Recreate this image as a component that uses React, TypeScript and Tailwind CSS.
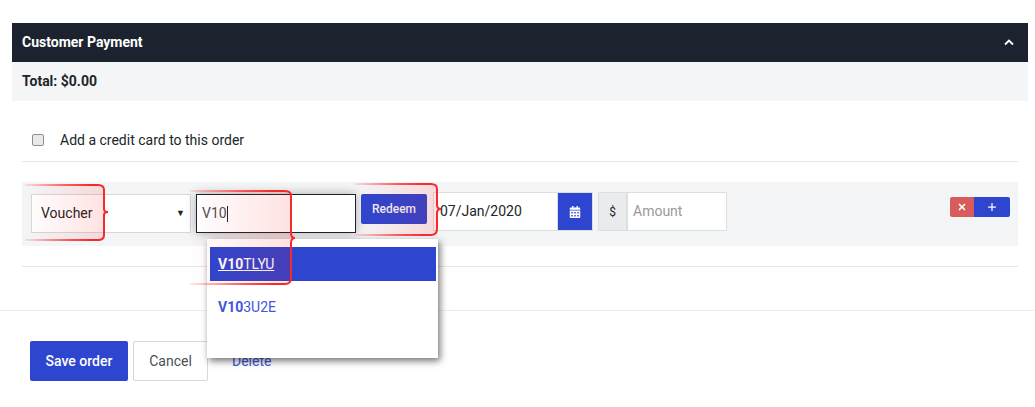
import React from "react";
import { Plus, X } from "lucide-react";
import { FaCalendarAlt } from "react-icons/fa";

function Callout({ className, d, id, w, h }: { className: string; d: string; id: string; w: number; h: number }) {
  return (
    <svg className={`absolute pointer-events-none ${className}`} width={w} height={h} viewBox={`0 0 ${w} ${h}`} fill="none">
      <defs>
        <linearGradient id={id} x1="0" x2="1" y1="0" y2="0">
          <stop offset="0" stopColor="#ff0000" stopOpacity="0" />
          <stop offset="1" stopColor="#ff0000" stopOpacity="0.12" />
        </linearGradient>
        <linearGradient id={id + "s"} x1="0" x2="1" y1="0" y2="0">
          <stop offset="0" stopColor="#ff2a2a" stopOpacity="0.1" />
          <stop offset="0.5" stopColor="#ff2a2a" stopOpacity="0.75" />
          <stop offset="0.8" stopColor="#f52a2a" stopOpacity="1" />
          <stop offset="1" stopColor="#f52a2a" stopOpacity="1" />
        </linearGradient>
      </defs>
      <path d={d} fill={`url(#${id})`} stroke={`url(#${id}s)`} strokeWidth="2" />
    </svg>
  );
}

export default function App() {
  return (
    <div className="relative w-[1035px] h-[407px] bg-white overflow-hidden text-[14px] text-[#212529] font-['Roboto',sans-serif]">
      <div className="pt-[23px] px-[12px] pr-[7px]">
        <div className="h-[39px] bg-[#1c232e] flex items-center justify-between px-[10px] pr-[14px] text-white font-bold text-[14px]">
          <span>Customer Payment</span>
          <svg width="10" height="7" viewBox="0 0 10 7" fill="none" stroke="white" strokeWidth="1.8"><path d="M1 5.5 L5 1.5 L9 5.5" /></svg>
        </div>
        <div className="h-[39px] bg-[#f4f5f7] flex items-center px-[10px] font-bold text-[14px]">Total: $0.00</div>
      </div>

      <div className="mx-[22px] mr-[17px]">
        <label className="h-[60px] flex items-center pl-[10px] pt-[18px] gap-[16px] text-[14px]">
          <span className="w-[12px] h-[12px] rounded-[2px] border border-[#8e8e8e] bg-[#e9e9e9] block" />
          <span>Add a credit card to this order</span>
        </label>
        <div className="h-px bg-[#e6e8e8]" />
        <div className="mt-[20px] h-[64px] bg-[#f4f5f7] flex items-start pl-[9px] pr-[8px]">
          <div className="mt-[12px] w-[160px] h-[39px] border border-[#d5d8d9] bg-white flex items-center justify-between pl-[9px] pr-[5px]">
            <span>Voucher</span>
            <span className="text-[9px] text-[#222]">▼</span>
          </div>
          <div className="ml-[5px] mt-[12px] w-[160px] h-[39px] border border-[#1c232e] bg-white flex items-center pl-[5px] shadow-[0_0_10px_rgba(0,0,0,0.3)] text-[#495057]">
            <span>V10</span>
            <span className="w-px h-[16px] bg-[#222]" />
          </div>
          <button className="ml-[5px] mt-[12px] w-[66px] h-[30px] rounded-[2px] bg-[#2e46cf] text-[#f0f0f8] font-medium text-[12px]">Redeem</button>
          <div className="ml-[6px] mt-[10px] w-[124px] h-[39px] border border-[#dcdfe0] border-r-0 bg-white flex items-center pl-[6px]">07/Jan/2020</div>
          <div className="w-[36px] h-[39px] mt-[10px] bg-[#2e46cf] border border-[#dcdfe0] flex items-center justify-center text-white">
            <FaCalendarAlt size={12} />
          </div>
          <div className="ml-[5px] mt-[10px] w-[29px] h-[39px] bg-[#e9ecef] border border-[#dcdfe0] flex items-center justify-center text-[12px]">$</div>
          <div className="mt-[10px] w-[100px] h-[39px] bg-white border border-[#dcdfe0] flex items-center pl-[5px] text-[#9a9a9a]">Amount</div>
          <div className="ml-auto mt-[15px] flex h-[20px]">
            <div className="w-[24px] bg-[#d95c5c] rounded-l-[2px] flex items-center justify-center text-white"><X size={10} strokeWidth={4} /></div>
            <div className="w-[36px] bg-[#2e46cf] rounded-r-[2px] flex items-center justify-center text-white"><Plus size={12} strokeWidth={2.5} /></div>
          </div>
        </div>
        <div className="mt-[20px] h-px bg-[#e6e8e8]" />
      </div>

      <div className="mt-[43px] h-px bg-[#ebeeee]" />
      <div className="pt-[30px] pl-[30px] flex items-center">
        <button className="w-[98px] h-[40px] rounded-[2px] bg-[#2e46cf] text-white font-medium text-[14px]">Save order</button>
        <button className="ml-[5px] w-[75px] h-[40px] rounded-[2px] border border-[#d5d8d9] bg-white text-[#495057] text-[14px]">Cancel</button>
        <a className="ml-[24px] text-[#3f57dd]">Delete</a>
      </div>

      <div className="absolute left-[207px] top-[239px] w-[231px] h-[119px] bg-white shadow-[2px_3px_7px_rgba(0,0,0,0.55)] pt-[8px] pl-[3px] pr-[2px] text-[14px]">
        <div className="h-[34px] bg-[#2e46cf] flex items-center pl-[8px] text-white underline"><b>V10</b>TLYU</div>
        <div className="h-[52px] flex items-center pl-[8px] text-[#3f57dd]"><b>V10</b>3U2E</div>
      </div>

      <Callout id="a" className="left-[24px] top-[184px]" w={86} h={58}
        d="M1 1 H74 Q80 1 80 6 V25 Q80 28 84 28 Q80 28 80 31 V51 Q80 56 74 56 H1" />
      <Callout id="b" className="left-[189px] top-[190px]" w={108} h={96}
        d="M1 1 H96 Q102 1 102 6 V43 Q102 48 106 48 Q102 48 102 53 V88 Q102 94 96 94 H1" />
      <Callout id="c" className="left-[353px] top-[183px]" w={90} h={54}
        d="M1 1 H78 Q84 1 84 6 V22 Q84 26 88 26 Q84 26 84 30 V46 Q84 52 78 52 H1" />
    </div>
  );
}
